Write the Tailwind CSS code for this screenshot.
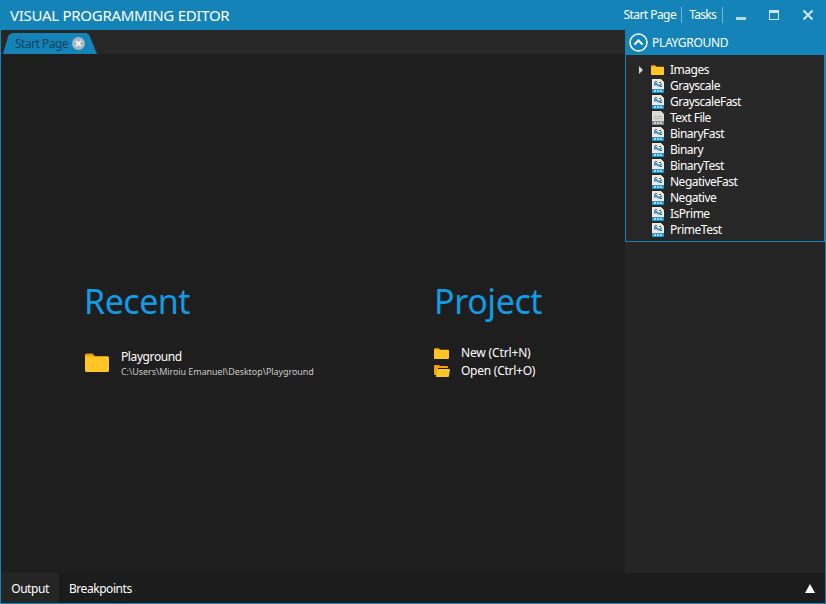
<!DOCTYPE html>
<html lang="en">
<head>
    <meta charset="UTF-8">
    <title>Visual Programming Editor</title>
    <script src="https://cdn.jsdelivr.net/npm/@tailwindcss/browser@4"></script>
</head>
<body class="bg-[#1e1e1e] font-['Noto_Sans',sans-serif] overflow-hidden">

    <svg class="hidden">
        <symbol id="vpl" viewBox="0 0 12 14">
            <path d="M0 0h9l3 3v11H0z" fill="#ecece4"/>
            <path d="M2 3l3 1 2 2 3-2v2L7 8 4 6 2 7z" fill="#3a8fc8"/>
            <path d="M3 2h2v1H3zM7 3h2v1H7zM8 7h2v1H8z" fill="#555"/>
            <path d="M0 10h12v4H0z" fill="#1c9ad6"/>
            <path d="M2 11h2v2H2zM5 11h2v2H5zM8 11h2v2H8z" fill="#a8daf2"/>
        </symbol>
        <symbol id="txt" viewBox="0 0 12 14">
            <path d="M0 0h9l3 3v11H0z" fill="#dcdcd4"/>
            <path d="M2 5h8v1H2zM2 7h8v1H2z" fill="#b8b4ac"/>
            <path d="M0 10h12v4H0z" fill="#7f8f94"/>
            <path d="M2 11h2v2H2zM5 11h2v2H5zM8 11h2v2H8z" fill="#c8d0d2"/>
        </symbol>
        <symbol id="folder" viewBox="0 0 16 12">
            <path d="M0 1.500Q0 .5 1 .5h4l1.500 1.500H15q1 0 1 1V11q0 1-1 1H1q-1 0-1-1z" fill="#ffc524"/>
            <path d="M0 2V1.500Q0 .5 1 .5h4l1.500 1.500z" fill="#f59f0b"/>
        </symbol>
    </svg>

    <div class="w-[826px] h-[604px] flex flex-col border border-[#1484b8] border-t-0">

        <header class="h-[30px] shrink-0 -mx-px bg-[#1484b8] flex items-center text-white">
            <div class="pl-[10px] text-[15px] tracking-[-0.28px] flex-1">VISUAL PROGRAMMING EDITOR</div>
            <div class="text-[12px] tracking-[-0.55px] border-r border-white/40 pr-[5px] mr-[7px] leading-[16px]">Start Page</div>
            <div class="text-[12px] tracking-[-0.7px] border-r border-white/40 pr-[6px] leading-[16px]">Tasks</div>
            <div class="w-[10px] ml-[13px] h-[3px] mt-[7px] bg-white/70"></div>
            <div class="w-[10px] h-[10px] ml-[23px] border border-white/80 border-t-[3px]"></div>
            <svg class="w-[12px] h-[12px] ml-[23px] mr-[12px]" viewBox="0 0 12 12"><path d="M1.500 1.500l9 9M10.500 1.500l-9 9" stroke="#fff" stroke-opacity=".8" stroke-width="2"/></svg>
        </header>

        <div class="flex-1 flex min-h-0">
            <main class="w-[624px] shrink-0 flex flex-col">
                <div class="h-[24px] shrink-0 bg-[#272727] flex items-end pl-[2px]">
                    <div class="relative w-[94px] h-[21px]">
                        <svg class="absolute inset-0" width="94" height="21" viewBox="0 0 94 21"><path d="M0 21L5 4Q6 0 11 0H82Q86 0 87 4L94 21z" fill="#1484b8"/></svg>
                        <div class="relative flex items-center pl-[12px] h-full text-[12px] tracking-[-0.5px] text-[#16415c]">
                            Start Page
                            <svg class="w-[13px] h-[13px] ml-[4px]" viewBox="0 0 13 13"><circle cx="6.500" cy="6.500" r="6.500" fill="#a9b8c2"/><path d="M4 4l5 5M9 4l-5 5" stroke="#fff" stroke-width="1.600"/></svg>
                        </div>
                    </div>
                </div>
                <div class="flex-1 flex pl-[83px] pt-[224px]">
                    <section class="w-[350px]">
                        <h2 class="text-[34px] leading-[46px] font-normal text-[#119ce6] tracking-[-0.5px]">Recent</h2>
                        <div class="flex mt-[22px]">
                            <svg class="w-[24px] h-[19px] mt-[7px] ml-[1px]" viewBox="0 0 16 12" preserveAspectRatio="none"><use href="#folder"/></svg>
                            <div class="ml-[12px] pt-[3px]">
                                <div class="text-[12px] leading-[15px] tracking-[-0.4px] text-white">Playground</div>
                                <div class="text-[9px] leading-[15px] tracking-[-0.07px] text-[#c8c8c8]">C:\Users\Miroiu Emanuel\Desktop\Playground</div>
                            </div>
                        </div>
                    </section>
                    <section>
                        <h2 class="text-[34px] leading-[46px] font-normal text-[#119ce6] tracking-[-0.4px]">Project</h2>
                        <div class="mt-[21px] flex flex-col gap-[2px]">
                            <div class="flex items-center h-[16px] text-[12px] tracking-[-0.15px] text-white">
                                <svg class="w-[15px] h-[11px] mr-[12px]" viewBox="0 0 16 12" preserveAspectRatio="none"><use href="#folder"/></svg>New (Ctrl+N)
                            </div>
                            <div class="flex items-center h-[16px] text-[12px] tracking-[-0.25px] text-white">
                                <svg class="w-[16px] h-[12px] mr-[11px]" viewBox="0 0 16 12"><path d="M0 1q0-1 1-1h4l1 1h7q1 0 1 1v1H4v7H1q-1 0-1-1z" fill="#f59f0b"/><path d="M3 4h13l-1 7q0 1-1 1H2z" fill="#ffc524"/></svg>Open (Ctrl+O)
                            </div>
                        </div>
                    </section>
                </div>
            </main>

            <aside class="flex-1 bg-[#252526] flex flex-col">
                <div class="h-[25px] shrink-0 bg-[#1484b8] flex items-center pl-[4px] text-white">
                    <svg class="w-[19px] h-[19px]" viewBox="0 0 19 19" fill="none"><circle cx="9.500" cy="9.500" r="8.500" stroke="#fff" stroke-width="1.500"/><path d="M5.500 11.500l4-4 4 4" stroke="#fff" stroke-width="2"/></svg>
                    <span class="ml-[4px] text-[12px] tracking-[-0.3px]">PLAYGROUND</span>
                </div>
                <div class="h-[187px] border border-t-0 border-[#1484b8] bg-[#272727] pt-[7px] text-[12px] tracking-[-0.5px] text-white">
                    <div class="flex items-center h-[16px]">
                        <div class="ml-[13px] w-0 h-0 border-y-[4px] border-y-transparent border-l-[4px] border-l-[#d8d8d8]"></div>
                        <svg class="w-[13px] h-[10px] ml-[8px] mr-[6px]" viewBox="0 0 16 12" preserveAspectRatio="none"><use href="#folder"/></svg>Images
                    </div>
                    <div class="flex items-center h-[16px] pl-[26px]"><svg class="w-[12px] h-[14px] mr-[6px]"><use href="#vpl"/></svg>Grayscale</div>
                    <div class="flex items-center h-[16px] pl-[26px]"><svg class="w-[12px] h-[14px] mr-[6px]"><use href="#vpl"/></svg>GrayscaleFast</div>
                    <div class="flex items-center h-[16px] pl-[26px]"><svg class="w-[12px] h-[14px] mr-[6px]"><use href="#txt"/></svg>Text File</div>
                    <div class="flex items-center h-[16px] pl-[26px]"><svg class="w-[12px] h-[14px] mr-[6px]"><use href="#vpl"/></svg>BinaryFast</div>
                    <div class="flex items-center h-[16px] pl-[26px]"><svg class="w-[12px] h-[14px] mr-[6px]"><use href="#vpl"/></svg>Binary</div>
                    <div class="flex items-center h-[16px] pl-[26px]"><svg class="w-[12px] h-[14px] mr-[6px]"><use href="#vpl"/></svg>BinaryTest</div>
                    <div class="flex items-center h-[16px] pl-[26px]"><svg class="w-[12px] h-[14px] mr-[6px]"><use href="#vpl"/></svg>NegativeFast</div>
                    <div class="flex items-center h-[16px] pl-[26px]"><svg class="w-[12px] h-[14px] mr-[6px]"><use href="#vpl"/></svg>Negative</div>
                    <div class="flex items-center h-[16px] pl-[26px]"><svg class="w-[12px] h-[14px] mr-[6px]"><use href="#vpl"/></svg>IsPrime</div>
                    <div class="flex items-center h-[16px] pl-[26px]"><svg class="w-[12px] h-[14px] mr-[6px]"><use href="#vpl"/></svg>PrimeTest</div>
                </div>
            </aside>
        </div>

        <footer class="h-[30px] shrink-0 bg-[#1c1c1c] flex text-[12px] tracking-[-0.45px] text-white">
            <div class="w-[58px] bg-[#252526] flex items-center justify-center pt-[1px]">Output</div>
            <div class="flex items-center pl-[10px] flex-1 pt-[1px]">Breakpoints</div>
            <div class="w-0 h-0 mr-[10px] mt-[11px] border-x-[5px] border-x-transparent border-b-[9px] border-b-white"></div>
        </footer>
    </div>

</body>
</html>
